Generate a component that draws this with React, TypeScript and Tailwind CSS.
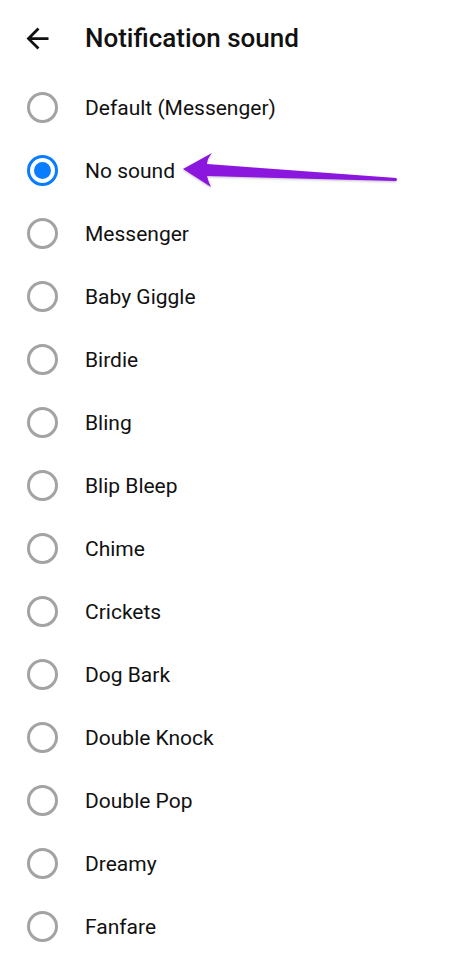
import React from "react";

const items = [
  "Default (Messenger)",
  "No sound",
  "Messenger",
  "Baby Giggle",
  "Birdie",
  "Bling",
  "Blip Bleep",
  "Chime",
  "Crickets",
  "Dog Bark",
  "Double Knock",
  "Double Pop",
  "Dreamy",
  "Fanfare",
];

function Radio({ checked }: { checked: boolean }) {
  if (checked) {
    return (
      <div className="w-[31px] h-[31px] rounded-full border-[3px] border-[#0a7cff] flex items-center justify-center">
        <div className="w-[17px] h-[17px] rounded-full bg-[#0a7cff]" />
      </div>
    );
  }
  return <div className="w-[31px] h-[31px] rounded-full border-[3px] border-[#a3a3a3]" />;
}

export default function App() {
  return (
    <div className="relative w-[474px] h-[971px] bg-white overflow-hidden" style={{ fontFamily: "Roboto, 'Liberation Sans', sans-serif" }}>
      <div className="h-[76px] flex items-center">
        <div className="w-[85px] flex items-center pl-[21px]">
          <svg width="33" height="33" viewBox="0 0 24 24">
            <path d="M20 11H7.83l5.59-5.59L12 4l-8 8 8 8 1.41-1.41L7.83 13H20v-2z" fill="#111" />
          </svg>
        </div>
        <div className="text-[26px] font-medium text-[#111] leading-none">Notification sound</div>
      </div>
      <div className="flex flex-col">
        {items.map((t, i) => (
          <div key={t} className="h-[63px] flex items-center">
            <div className="w-[85px] pl-[27px] flex items-center">
              <Radio checked={i === 1} />
            </div>
            <div className="text-[21px] text-[#111] leading-none pt-[2px]">{t}</div>
          </div>
        ))}
      </div>
      <svg className="absolute left-0 top-0 pointer-events-none" width="474" height="971" viewBox="0 0 474 971">
        <defs>
          <filter id="sh" x="-10%" y="-50%" width="120%" height="200%">
            <feDropShadow dx="0" dy="1" stdDeviation="1" floodColor="#000" floodOpacity="0.25" />
          </filter>
        </defs>
        <path
          d="M183 169 L212 153 Q207 159 207 164 L396 178 Q398 179.5 396 181 L207 176 Q208 181 211 187 Z"
          fill="#8b14de"
          filter="url(#sh)"
        />
      </svg>
    </div>
  );
}
